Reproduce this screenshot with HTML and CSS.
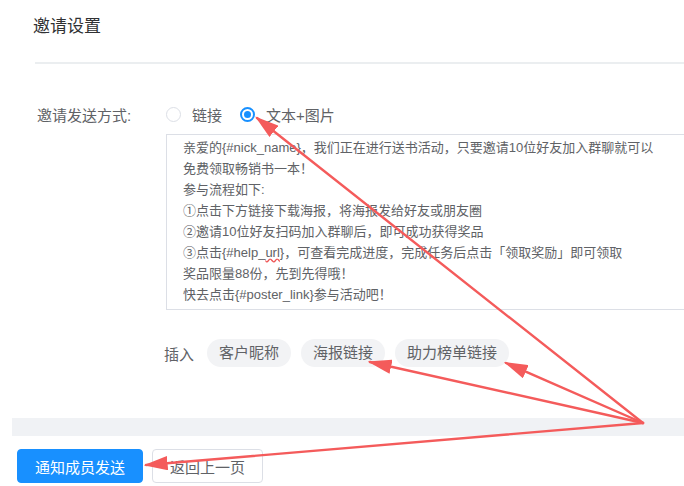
FILE: index.html
```html
<!DOCTYPE html>
<html lang="zh-CN">
<head>
    <meta charset="UTF-8">
    <title>邀请设置</title>
    <link rel="stylesheet" href="styles.css">
</head>
<body>
    <div class="page">
        <div class="card">
            <h2 class="card-title">邀请设置</h2>
            <div class="divider"></div>

            <div class="form-row">
                <label class="form-label">邀请发送方式:</label>
                <div class="radios">
                    <span class="radio"><i class="dot"></i>链接</span>
                    <span class="radio checked"><i class="dot"></i>文本+图片</span>
                </div>
            </div>

            <div class="msg-box">
                <p>亲爱的{#nick_name}，我们正在进行送书活动，只要邀请10位好友加入群聊就可以<br>免费领取畅销书一本！</p>
                <p>参与流程如下:</p>
                <p>①点击下方链接下载海报，将海报发给好友或朋友圈</p>
                <p>②邀请10位好友扫码加入群聊后，即可成功获得奖品</p>
                <p>③点击{#help_<span class="typo">url</span>}，可查看完成进度，完成任务后点击「领取奖励」即可领取</p>
                <p>奖品限量88份，先到先得哦！</p>
                <p>快去点击{#poster_link}参与活动吧！</p>
            </div>

            <div class="insert-row">
                <span class="insert-label">插入</span>
                <span class="tag">客户昵称</span>
                <span class="tag">海报链接</span>
                <span class="tag">助力榜单链接</span>
            </div>
        </div>

        <div class="gap-band"></div>

        <div class="footer">
            <button class="btn btn-primary">通知成员发送</button>
            <button class="btn">返回上一页</button>
        </div>
    </div>

    <!-- 标注箭头 -->
    <svg class="marks" width="684" height="486" viewBox="0 0 684 486">
        <defs>
            <marker id="head" markerWidth="10" markerHeight="6" refX="9" refY="3" orient="auto" markerUnits="strokeWidth">
                <path d="M0,0 L10,3 L0,6 Z" fill="#f45b5b"/>
            </marker>
        </defs>
        <g stroke="#f45b5b" stroke-width="2.4" fill="none" stroke-linecap="round">
            <line x1="643" y1="423" x2="257" y2="118" marker-end="url(#head)"/>
            <line x1="643" y1="423" x2="370" y2="362" marker-end="url(#head)"/>
            <line x1="643" y1="423" x2="506" y2="363" marker-end="url(#head)"/>
            <line x1="643" y1="423" x2="146" y2="465" marker-end="url(#head)"/>
        </g>
    </svg>
</body>
</html>
```

FILE: styles.css
```css
*{
    margin: 0px;
    padding: 0px;
    box-sizing: border-box;
}

body{
    width: 684px;
    height: 486px;
    overflow: hidden;
    background: #fff;
    font-family: "Liberation Sans", "Noto Sans CJK SC", sans-serif;
    color: #606266;
    position: relative;
}

.card{
    padding-left: 33px;
}

.card-title{
    font-size: 17px;
    font-weight: normal;
    color: #303133;
    line-height: 22px;
    padding-top: 16px;
}

.divider{
    margin-top: 24px;
    margin-left: 2px;
    height: 2px;
    background: #ebeef0;
}

.form-row{
    display: flex;
    align-items: center;
    margin-top: 40px;
    height: 20px;
}

.form-label{
    width: 133px;
    padding-left: 4px;
    font-size: 15px;
    color: #606266;
}

.radios{
    display: flex;
    align-items: center;
    gap: 18px;
}

.radio{
    display: flex;
    align-items: center;
    font-size: 15px;
    color: #606266;
}

.radio .dot{
    width: 15px;
    height: 15px;
    border: 1px solid #dcdfe6;
    border-radius: 50%;
    margin-right: 11px;
    position: relative;
}

.radio.checked .dot{
    border: 2px solid #1890ff;
}
.radio.checked .dot::after{
    content: "";
    position: absolute;
    left: 2px;
    top: 2px;
    width: 7px;
    height: 7px;
    border-radius: 50%;
    background: #1890ff;
}

/* 文本框右侧被截出画面，这里不画右边框 */
.msg-box{
    margin-top: 10px;
    margin-left: 133px;
    height: 176px;
    border: 1px solid #dcdfe6;
    border-right: none;
    padding: 2px 0 0 16px;
    font-size: 13px;
    line-height: 21px;
    color: #606266;
}

.msg-box .typo{
    text-decoration: underline wavy #e55;
}

.insert-row{
    display: flex;
    align-items: center;
    gap: 10px;
    margin-top: 29px;
    margin-left: 131px;
    height: 28px;
}

.insert-label{
    font-size: 15px;
    color: #606266;
    margin-right: 3px;
}

.tag{
    height: 28px;
    line-height: 28px;
    padding: 0 12px;
    border-radius: 14px;
    background: #f2f3f5;
    font-size: 15px;
    color: #606266;
}

.gap-band{
    margin-top: 51px;
    margin-left: 12px;
    height: 18px;
    background: #f0f2f5;
}

.footer{
    display: flex;
    gap: 9px;
    padding-left: 17px;
    margin-top: 13px;
}

.btn{
    height: 34px;
    padding: 0 17px;
    font-size: 15px;
    font-family: inherit;
    background: #fff;
    color: #606266;
    border: 1px solid #dcdfe6;
    border-radius: 4px;
}

.btn-primary{
    width: 126px;
    background: #1890ff;
    border-color: #1890ff;
    color: #fff;
}

.marks{
    position: absolute;
    left: 0;
    top: 0;
    pointer-events: none;
}
```
